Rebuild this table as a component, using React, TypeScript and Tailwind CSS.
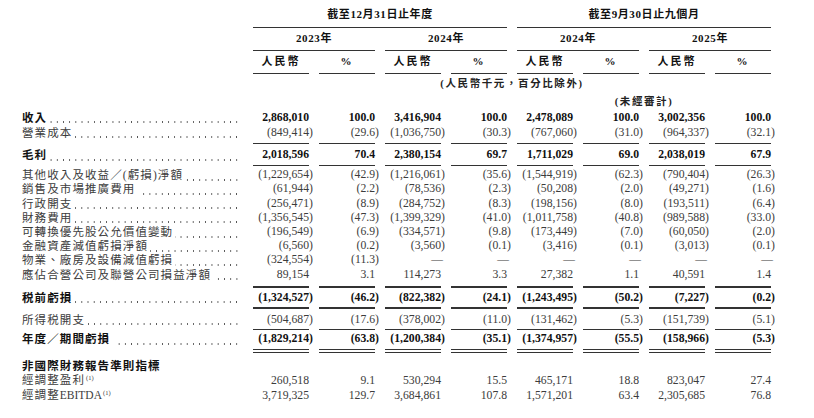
import type { ReactNode } from 'react';

type Row = {
  label: ReactNode;
  v?: string[];
  bold?: boolean;
  gap?: boolean;
  noDots?: boolean;
  h?: string;
};

const GRID = 'grid grid-cols-[221px_repeat(8,56px)] gap-x-[10px]';

const rowsTop: Row[] = [
  { label: '收入', bold: true, h: 'h-[15px]', v: ['2,868,010', '100.0', '3,416,904', '100.0', '2,478,089', '100.0', '3,002,356', '100.0'] },
  { label: '營業成本', h: 'h-[15px]', v: ['(849,414)', '(29.6)', '(1,036,750)', '(30.3)', '(767,060)', '(31.0)', '(964,337)', '(32.1)'] },
];

const rowsGross: Row[] = [
  { label: '毛利', bold: true, v: ['2,018,596', '70.4', '2,380,154', '69.7', '1,711,029', '69.0', '2,038,019', '67.9'] },
];

const rowsOps: Row[] = [
  { label: '其他收入及收益／(虧損)淨額', v: ['(1,229,654)', '(42.9)', '(1,216,061)', '(35.6)', '(1,544,919)', '(62.3)', '(790,404)', '(26.3)'] },
  { label: '銷售及市場推廣費用', gap: true, v: ['(61,944)', '(2.2)', '(78,536)', '(2.3)', '(50,208)', '(2.0)', '(49,271)', '(1.6)'] },
  { label: '行政開支', v: ['(256,471)', '(8.9)', '(284,752)', '(8.3)', '(198,156)', '(8.0)', '(193,511)', '(6.4)'] },
  { label: '財務費用', v: ['(1,356,545)', '(47.3)', '(1,399,329)', '(41.0)', '(1,011,758)', '(40.8)', '(989,588)', '(33.0)'] },
  { label: '可轉換優先股公允價值變動', v: ['(196,549)', '(6.9)', '(334,571)', '(9.8)', '(173,449)', '(7.0)', '(60,050)', '(2.0)'] },
  { label: '金融資產減值虧損淨額', v: ['(6,560)', '(0.2)', '(3,560)', '(0.1)', '(3,416)', '(0.1)', '(3,013)', '(0.1)'] },
  { label: '物業、廠房及設備減值虧損', v: ['(324,554)', '(11.3)', '—', '—', '—', '—', '—', '—'] },
  { label: '應佔合營公司及聯營公司損益淨額', gap: true, v: ['89,154', '3.1', '114,273', '3.3', '27,382', '1.1', '40,591', '1.4'] },
];

const rowsPbt: Row[] = [
  { label: '税前虧損', bold: true, v: ['(1,324,527)', '(46.2)', '(822,382)', '(24.1)', '(1,243,495)', '(50.2)', '(7,227)', '(0.2)'] },
];

const rowsTax: Row[] = [
  { label: '所得税開支', v: ['(504,687)', '(17.6)', '(378,002)', '(11.0)', '(131,462)', '(5.3)', '(151,739)', '(5.1)'] },
];

const rowsLoss: Row[] = [
  { label: '年度／期間虧損', bold: true, gap: true, v: ['(1,829,214)', '(63.8)', '(1,200,384)', '(35.1)', '(1,374,957)', '(55.5)', '(158,966)', '(5.3)'] },
];

const Sup = () => <span className="relative -top-[4px] ml-[1px] text-[6.5px] tracking-normal">(1)</span>;

const rowsNonIfrs: Row[] = [
  { label: '非國際財務報告準則指標', bold: true, noDots: true },
  { label: <>經調整盈利<Sup /></>, noDots: true, h: 'h-[15px]', v: ['260,518', '9.1', '530,294', '15.5', '465,171', '18.8', '823,047', '27.4'] },
  {
    label: <>經調整<span className="tracking-normal">EBITDA</span><Sup /></>,
    noDots: true,
    h: 'h-[15px]',
    v: ['3,719,325', '129.7', '3,684,861', '107.8', '1,571,201', '63.4', '2,305,685', '76.8'],
  },
];

function Val({ v }: { v: string }) {
  if (v === '—') {
    return <div className="mr-[-2px] flex justify-end">—</div>;
  }
  const neg = v.startsWith('(');
  return (
    <div className="flex justify-end whitespace-nowrap">
      {neg ? (
        <>
          {v.slice(0, -1)}
          <span className="inline-block w-0">)</span>
        </>
      ) : (
        v
      )}
    </div>
  );
}

function DataRow({ row }: { row: Row }) {
  const tone = row.bold ? 'font-bold text-[#111]' : 'text-[#3c3c3c]';
  return (
    <div className={`${GRID} ${row.h ?? 'h-[14.2px]'} items-center text-[11.7px] leading-[14px] ${tone}`}>
      <div className="flex h-[14px] min-w-0 items-center">
        <span className="shrink-0 whitespace-nowrap text-[11.5px] tracking-[1.1px]">{row.label}</span>
        {!row.noDots && (
          // dot leader, right-aligned so the last dot sits just before the first column
          <span
            className={`mt-[9px] mr-[3px] h-[2px] min-w-0 flex-1 bg-[radial-gradient(circle,#555_0.6px,transparent_0.9px)] bg-[length:6.2px_2px] bg-right bg-repeat-x ${row.gap ? 'ml-[6px]' : 'ml-[2px]'}`}
          />
        )}
      </div>
      {row.v?.map((v, i) => <Val key={i} v={v} />)}
    </div>
  );
}

function Rule({ className = '' }: { className?: string }) {
  return (
    <div className={`${GRID} ${className}`}>
      <div />
      {Array.from({ length: 8 }).map((_, i) => (
        <div key={i} className="h-[1.5px] bg-[#333]" />
      ))}
    </div>
  );
}

function DoubleRule({ className = '' }: { className?: string }) {
  return (
    <div className={`${GRID} ${className}`}>
      <div />
      {Array.from({ length: 8 }).map((_, i) => (
        <div key={i} className="flex flex-col gap-[1.5px]">
          <div className="h-[1.5px] bg-[#333]" />
          <div className="h-[1.5px] bg-[#333]" />
        </div>
      ))}
    </div>
  );
}

function Header() {
  const head = 'text-center text-[11px] font-bold text-[#111] tracking-[0.6px]';
  return (
    <div className="text-[11px]">
      <div className={`${GRID} h-[28px]`}>
        <div />
        <div className="col-span-4 flex flex-col justify-end">
          <div className={`${head} pb-[4px]`}>截至12月31日止年度</div>
          <div className="h-[1.5px] bg-[#333]" />
        </div>
        <div className="col-span-4 flex flex-col justify-end">
          <div className={`${head} pb-[4px]`}>截至9月30日止九個月</div>
          <div className="h-[1.5px] bg-[#333]" />
        </div>
      </div>
      <div className={`${GRID} h-[23px]`}>
        <div />
        {['2023年', '2024年', '2024年', '2025年'].map((y, i) => (
          <div key={i} className="col-span-2 flex flex-col justify-end">
            <div className={`${head} flex flex-1 items-center justify-center pb-[1px]`}>{y}</div>
            <div className="h-[1.5px] bg-[#333]" />
          </div>
        ))}
      </div>
      <div className={`${GRID} h-[23px]`}>
        <div />
        {Array.from({ length: 8 }).map((_, i) => (
          <div key={i} className="flex flex-col justify-end">
            <div className={`${head} flex flex-1 items-center justify-center pb-[1px] tracking-[2px]`}>
              {i % 2 === 0 ? '人民幣' : '%'}
            </div>
            <div className="h-[1.5px] bg-[#333]" />
          </div>
        ))}
      </div>
      <div className={`${GRID} h-[20px]`}>
        <div />
        <div className="col-span-8 flex items-center justify-center text-[10.5px] font-bold tracking-[1.6px] text-[#222]">
          (人民幣千元，百分比除外)
        </div>
      </div>
      <div className={`${GRID} h-[16px]`}>
        <div />
        <div className="col-span-4" />
        <div className="col-span-4 flex items-center justify-center text-[10.5px] font-bold tracking-[1.6px] text-[#222]">
          (未經審計)
        </div>
      </div>
    </div>
  );
}

export default function App() {
  return (
    <div className="h-[418px] w-[814px] overflow-hidden bg-white pl-[22px] font-['Liberation_Serif','Noto_Sans_CJK_TC',serif]">
      <Header />
      {rowsTop.map((r, i) => <DataRow key={i} row={r} />)}
      <Rule className="mt-[2.5px] mb-[4px]" />
      {rowsGross.map((r, i) => <DataRow key={i} row={r} />)}
      <Rule className="mt-[2.5px] mb-[2px]" />
      {rowsOps.map((r, i) => <DataRow key={i} row={r} />)}
      <Rule className="mt-[4.5px] mb-[3px]" />
      {rowsPbt.map((r, i) => <DataRow key={i} row={r} />)}
      <Rule className="mt-[2.5px] mb-[4px]" />
      {rowsTax.map((r, i) => <DataRow key={i} row={r} />)}
      <Rule className="mt-[1.5px] mb-[2px]" />
      {rowsLoss.map((r, i) => <DataRow key={i} row={r} />)}
      <DoubleRule className="mt-[2.5px] mb-[5.8px]" />
      {rowsNonIfrs.map((r, i) => <DataRow key={i} row={r} />)}
    </div>
  );
}
